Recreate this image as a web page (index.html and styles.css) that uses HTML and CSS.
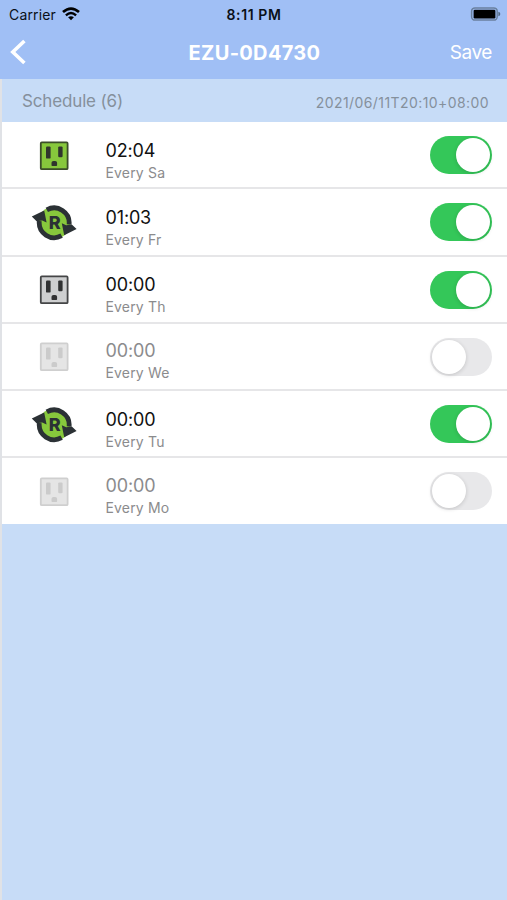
FILE: index.html
```html
<!DOCTYPE html>
<html lang="en">
<head>
<meta charset="utf-8">
<title>Schedule</title>
<link rel="stylesheet" href="styles.css">
</head>
<body>
<svg class="defs" width="0" height="0" aria-hidden="true">
  <symbol id="outlet" viewBox="0 0 48 40">
    <rect class="plate" x="10.8" y="6.4" width="26.8" height="26.8" rx="1" stroke-width="1.8"/>
    <rect class="slot" x="16" y="10.4" width="4.6" height="12.2" rx="1.2"/>
    <rect class="slot" x="28.2" y="10.4" width="4.4" height="10.8" rx="1.2"/>
    <path class="slot" d="M21.5 29.2v-2.4q0-1.9 2-1.9h1.6q2 0 2 1.9v2.4q0 .8-.8.8h-4q-.8 0-.8-.8z"/>
  </symbol>
  <symbol id="restart" viewBox="0 0 48 40">
    <circle cx="24.2" cy="19.8" r="16.2" fill="#87c83c"/>
    <path d="M16.8 6.9A15 15 0 0 1 39.1 21.5" fill="none" stroke="#2b3135" stroke-width="4.8"/>
    <path d="M31.6 32.7A15 15 0 0 1 9.3 18.1" fill="none" stroke="#2b3135" stroke-width="4.8"/>
    <path d="M1.8 13.6L14.2 7.4L16.6 19.4L12.2 17.4L6.6 18.2Z" fill="#2b3135"/>
    <path d="M46.6 26L34.2 32.2L31.8 20.2L36.2 22.2L41.8 21.4Z" fill="#2b3135"/>
  </symbol>
</svg>
<header class="top">
  <div class="status">
    <div class="carrier"><span>Carrier</span>
      <svg width="18" height="14" viewBox="0 0 18 14"><path d="M1 5.1Q9-2 17 5.1" fill="none" stroke="#000" stroke-width="2.7"/><path d="M3.9 8.3Q9 3.8 14.1 8.3" fill="none" stroke="#000" stroke-width="2.4"/><path d="M6.1 10.3Q9 8 11.9 10.3L9 13.2Z"/></svg>
    </div>
    <div class="clock">8:11 PM</div>
    <svg class="battery" width="31" height="14" viewBox="0 0 31 14"><rect x="1.6" y=".9" width="25.6" height="12.2" rx="3.4" fill="none" stroke="#69809f" stroke-width="1.5"/><rect x="3.6" y="2.8" width="21.8" height="8.6" rx="1.2"/><path d="M28.4 4.7q1.9.6 1.9 2.3t-1.9 2.3z" fill="#526985"/></svg>
  </div>
  <nav class="nav">
    <svg class="back" width="18" height="28" viewBox="0 0 18 28"><path d="M16.4 3L4.8 14L16.4 25" fill="none" stroke="#fff" stroke-width="3.6"/></svg>
    <h1>EZU-0D4730</h1>
    <span class="save">Save</span>
  </nav>
</header>
<main>
  <div class="section"><span class="name">Schedule (6)</span><span class="date">2021/06/11T20:10+08:00</span></div>
  <ul class="list">
    <li><svg class="icon green"><use href="#outlet"/></svg><div class="info"><b>02:04</b><span>Every Sa</span></div><i class="switch on"></i></li>
    <li><svg class="icon" viewBox="0 0 48 40"><use href="#restart"/><text class="letter" x="24.7" y="26" text-anchor="middle">R</text></svg><div class="info"><b>01:03</b><span>Every Fr</span></div><i class="switch on"></i></li>
    <li><svg class="icon gray"><use href="#outlet"/></svg><div class="info"><b>00:00</b><span>Every Th</span></div><i class="switch on"></i></li>
    <li class="off"><svg class="icon pale"><use href="#outlet"/></svg><div class="info"><b>00:00</b><span>Every We</span></div><i class="switch"></i></li>
    <li><svg class="icon" viewBox="0 0 48 40"><use href="#restart"/><text class="letter" x="24.7" y="26" text-anchor="middle">R</text></svg><div class="info"><b>00:00</b><span>Every Tu</span></div><i class="switch on"></i></li>
    <li class="off"><svg class="icon pale"><use href="#outlet"/></svg><div class="info"><b>00:00</b><span>Every Mo</span></div><i class="switch"></i></li>
  </ul>
</main>
</body>
</html>
```
FILE: styles.css
```css
* { box-sizing: border-box; }
html, body { height: 100%; }
body {
  margin: 0;
  display: flex;
  flex-direction: column;
  overflow: hidden;
  background: #c7dcf7;
  font-family: Inter, "Liberation Sans", sans-serif;
}
.defs { position: absolute; }
.top { height: 79px; flex: none; background: #a0bff5; }
.status {
  height: 27px;
  padding: 0 6px 0 9px;
  display: grid;
  grid-template-columns: 1fr auto 1fr;
  align-items: center;
  font-size: 14px;
  line-height: 27px;
  color: #0a1018;
}
.carrier { display: flex; align-items: center; gap: 6px; letter-spacing: .15px; }
.clock { font-weight: 600; font-size: 14px; letter-spacing: .6px; margin-right: 2px; padding-top: 1px; }
.battery { justify-self: end; }
.nav {
  height: 52px;
  padding: 0 15px 0 8px;
  display: grid;
  grid-template-columns: 1fr auto 1fr;
  align-items: center;
  color: #fff;
}
.nav h1 { margin: 2px 0 0 9px; font-size: 20px; font-weight: 700; line-height: 50px; letter-spacing: .32px; }
.save { justify-self: end; margin-top: 2px; font-size: 19px; line-height: 50px; letter-spacing: -.4px; }
.nav > * { position: relative; top: -1px; }
main { flex: 1; border-left: 2px solid #e0e2e6; }
.section {
  height: 43px;
  padding: 0 18px 0 20px;
  display: flex;
  justify-content: space-between;
  align-items: center;
  color: #85909c;
}
.name { font-size: 17px; letter-spacing: -.15px; }
.date { font-size: 14px; padding-top: 4px; letter-spacing: .42px; }
.list { margin: 0; padding: 0; list-style: none; background: #fff; }
.list li {
  height: 67.25px;
  padding: 2px 15px 0 28px;
  display: flex;
  align-items: center;
  border-bottom: 2px solid #e6e6e8;
}
.list li:last-child { height: 66px; border-bottom-width: 0; padding-bottom: 1px; }
.icon { width: 48px; height: 40px; }
.green { --fill: #87c83c; --line: #3b4e29; --slot: #30352d; }
.gray { --fill: #cecfd0; --line: #444546; --slot: #303132; }
.pale { --fill: #e5e5e5; --line: #cfcfcf; --slot: #cbcbcb; }
.plate { fill: var(--fill); stroke: var(--line); }
.slot { fill: var(--slot); }
.letter { font: 800 18px Inter, sans-serif; fill: #2b3135; }
.info { flex: 1; margin-left: 27.5px; padding-top: 10px; display: flex; flex-direction: column; }
.info b { font-size: 18px; font-weight: 400; line-height: 24px; letter-spacing: -.15px; color: #111; }
.info span { font-size: 14px; line-height: 20px; letter-spacing: .17px; color: #8b8b8d; }
.off .info { padding-top: 8px; }
.off .info b { color: #8b8b8d; }
.switch {
  width: 62px;
  height: 38px;
  margin-top: -1px;
  padding: 2px;
  display: flex;
  border-radius: 19px;
  background: #e8e8ea;
}
.switch::before {
  content: "";
  width: 34px;
  height: 34px;
  border-radius: 50%;
  background: #fff;
  box-shadow: 0 1px 4px rgba(0, 0, 0, .16);
}
.on { justify-content: flex-end; background: #34c759; }
```
